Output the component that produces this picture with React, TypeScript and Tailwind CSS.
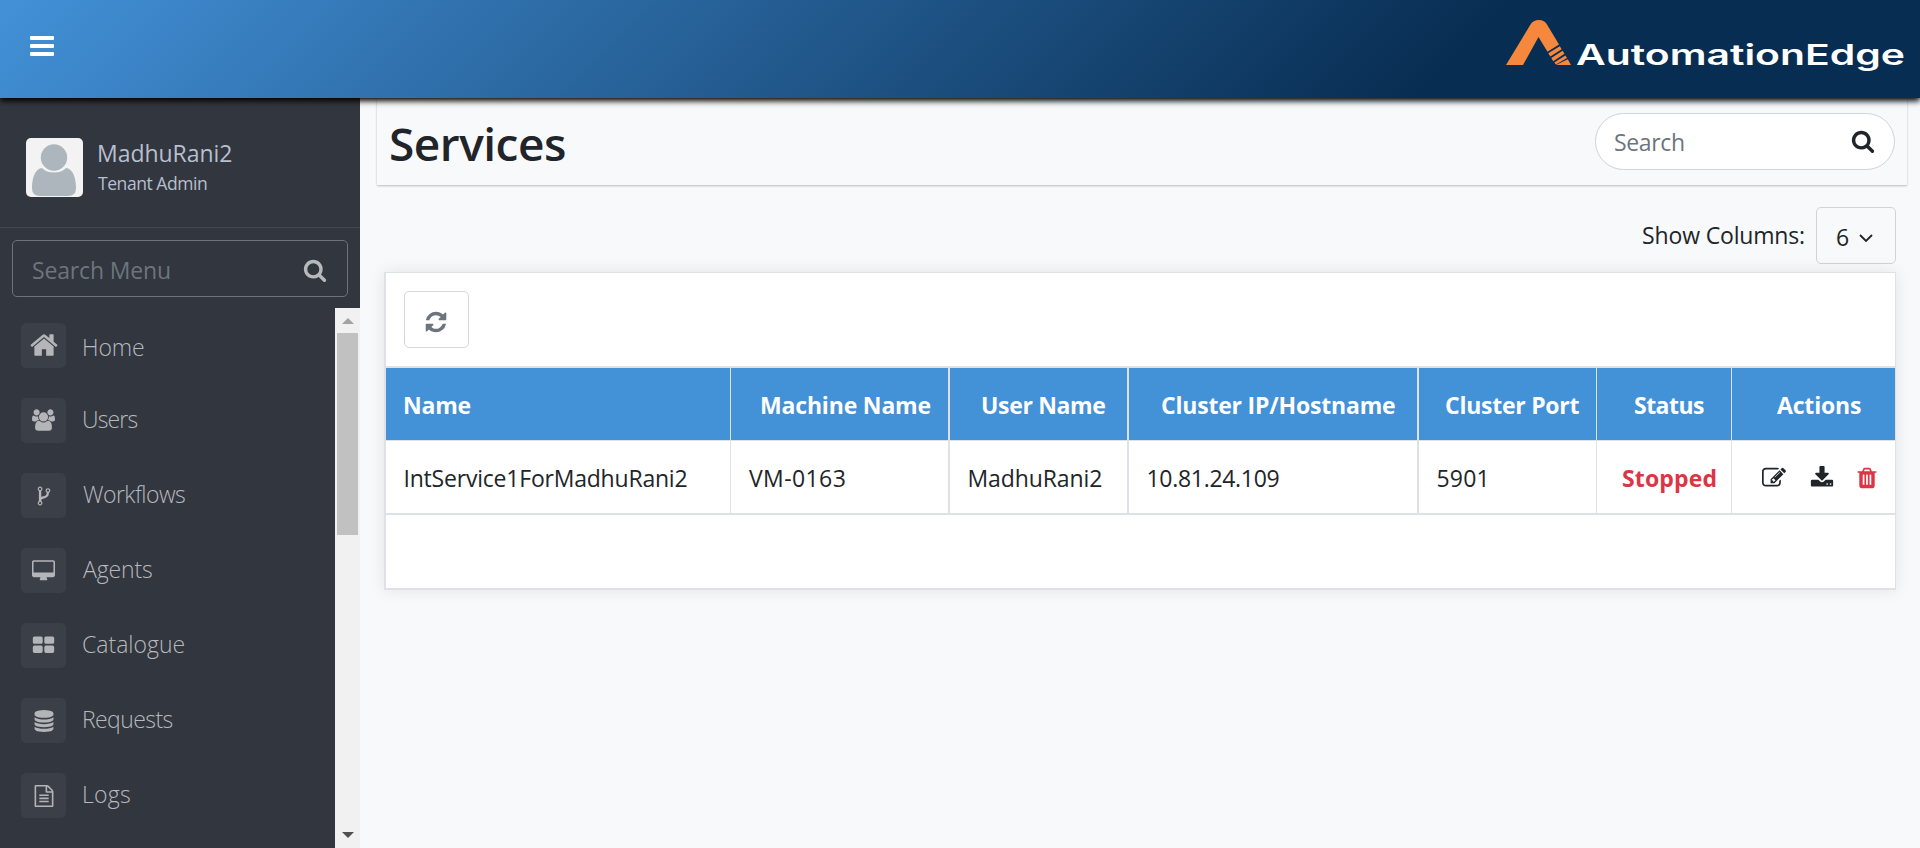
import React from "react";

const HOME = "M1472 992v480q0 26-19 45t-45 19h-384v-384h-256v384h-384q-26 0-45-19t-19-45v-480q0-1 .5-3t.5-3l575-474 575 474q1 2 1 6zm223-69l-62 74q-8 9-21 11h-3q-13 0-21-7l-692-577-692 577q-12 8-24 7-13-2-21-11l-62-74q-8-10-7-23.5t11-21.5l719-599q32-26 76-26t76 26l244 204v-195q0-14 9-23t23-9h192q14 0 23 9t9 23v408l219 182q10 8 11 21.5t-7 23.5z";
const USERS = "M593 896q-162 5-265 128h-134q-82 0-138-40.5t-56-118.5q0-353 124-353 6 0 43.5 21t97.5 42.5 119 21.5q67 0 133-23-5 37-5 66 0 139 81 256zm1071 637q0 120-73 189.5t-194 69.5h-874q-121 0-194-69.5t-73-189.5q0-53 3.5-103.5t14-109 26.5-108.5 43-97.5 62-81 85.5-53.5 111.5-20q10 0 43 21.5t73 48 107 48 135 21.5 135-21.5 107-48 73-48 43-21.5q61 0 111.5 20t85.5 53.5 62 81 43 97.5 26.5 108.5 14 109 3.5 103.5zm-1024-1277q0 106-75 181t-181 75-181-75-75-181 75-181 181-75 181 75 75 181zm704 384q0 159-112.5 271.5t-271.5 112.5-271.5-112.5-112.5-271.5 112.5-271.5 271.5-112.5 271.5 112.5 112.5 271.5zm576 225q0 78-56 118.5t-138 40.5h-134q-103-123-265-128 81-117 81-256 0-29-5-66 66 23 133 23 59 0 119-21.5t97.5-42.5 43.5-21q124 0 124 353zm-128-609q0 106-75 181t-181 75-181-75-75-181 75-181 181-75 181 75 75 181z";
const FORK = "M672 1472q0-40-28-68t-68-28-68 28-28 68 28 68 68 28 68-28 28-68zm0-1152q0-40-28-68t-68-28-68 28-28 68 28 68 68 28 68-28 28-68zm640 128q0-40-28-68t-68-28-68 28-28 68 28 68 68 28 68-28 28-68zm96 0q0 52-26 96.5t-70 69.5q-2 287-226 414-67 38-203 81-128 40-169.5 71t-41.5 100v26q44 25 70 69.5t26 96.5q0 80-56 136t-136 56-136-56-56-136q0-52 26-96.5t70-69.5v-820q-44-25-70-69.5t-26-96.5q0-80 56-136t136-56 136 56 56 136q0 52-26 96.5t-70 69.5v497q54-26 154-57 55-17 87.500-29.500t70.500-31 59-39.500 40.500-51 28-69.500 8.500-91.500q-44-25-70-69.500t-26-96.500q0-80 56-136t136-56 136 56 56 136z";
const DESKTOP = "M1728 992v-832q0-13-9.5-22.5t-22.5-9.5h-1600q-13 0-22.5 9.5t-9.5 22.5v832q0 13 9.5 22.5t22.5 9.5h1600q13 0 22.5-9.5t9.5-22.5zm128-832v1088q0 66-47 113t-113 47h-544q0 37 16 77.5t32 71 16 43.5q0 26-19 45t-45 19h-512q-26 0-45-19t-19-45q0-14 16-44t32-70 16-78h-544q-66 0-113-47t-47-113v-1088q0-66 47-113t113-47h1600q66 0 113 47t47 113z";
const GRID = "M192 192h512q128 0 128 128v320q0 128-128 128h-512q-128 0-128-128v-320q0-128 128-128zM1088 192h512q128 0 128 128v320q0 128-128 128h-512q-128 0-128-128v-320q0-128 128-128zM192 896h512q128 0 128 128v320q0 128-128 128h-512q-128 0-128-128v-320q0-128 128-128zM1088 896h512q128 0 128 128v320q0 128-128 128h-512q-128 0-128-128v-320q0-128 128-128z";
const DATABASE = "M896 768q237 0 443-43t325-127v170q0 69-103 128t-280 93.5-385 34.5-385-34.5-280-93.5-103-128v-170q119 84 325 127t443 43zm0 768q237 0 443-43t325-127v170q0 69-103 128t-280 93.5-385 34.5-385-34.5-280-93.5-103-128v-170q119 84 325 127t443 43zm0-384q237 0 443-43t325-127v170q0 69-103 128t-280 93.5-385 34.5-385-34.5-280-93.5-103-128v-170q119 84 325 127t443 43zm0-1152q208 0 385 34.5t280 93.5 103 128v128q0 69-103 128t-280 93.5-385 34.5-385-34.5-280-93.5-103-128v-128q0-69 103-128t280-93.5 385-34.5z";
const FILE = "M1596 380q28 28 48 76t20 88v1152q0 40-28 68t-68 28h-1344q-40 0-68-28t-28-68v-1600q0-40 28-68t68-28h896q40 0 88 20t76 48zm-444-244v376h376q-10-29-22-41l-313-313q-12-12-41-22zm384 1528v-1024h-416q-40 0-68-28t-28-68v-416h-768v1536h1280zm-1024-864q0-14 9-23t23-9h704q14 0 23 9t9 23v64q0 14-9 23t-23 9h-704q-14 0-23-9t-9-23v-64zm736 224q14 0 23 9t9 23v64q0 14-9 23t-23 9h-704q-14 0-23-9t-9-23v-64q0-14 9-23t23-9h704zm0 256q14 0 23 9t9 23v64q0 14-9 23t-23 9h-704q-14 0-23-9t-9-23v-64q0-14 9-23t23-9h704z";
const SEARCH = "M1216 832q0-185-131.5-316.5t-316.5-131.5-316.5 131.5-131.5 316.5 131.5 316.5 316.5 131.5 316.5-131.5 131.5-316.5zm512 832q0 52-38 90t-90 38q-54 0-90-38l-343-342q-179 124-399 124-143 0-273.5-55.5t-225-150-150-225-55.5-273.5 55.5-273.5 150-225 225-150 273.5-55.5 273.5 55.5 225 150 150 225 55.5 273.5q0 220-124 399l343 343q37 37 37 90z";
const REFRESH = "M1639 1056q0 5-1 7-64 268-268 434.5t-478 166.5q-146 0-282.5-55t-243.5-157l-129 129q-19 19-45 19t-45-19-19-45v-448q0-26 19-45t45-19h448q26 0 45 19t19 45-19 45l-137 137q71 66 161 102t187 36q134 0 250-65t186-179q11-17 53-117 8-23 30-23h192q13 0 22.5 9.5t9.5 22.5zm25-800v448q0 26-19 45t-45 19h-448q-26 0-45-19t-19-45 19-45l138-138q-148-137-349-137-134 0-250 65t-186 179q-11 17-53 117-8 23-30 23h-199q-13 0-22.5-9.5t-9.5-22.5v-7q65-268 270-434.5t480-166.5q146 0 284 55.5t245 156.5l130-129q19-19 45-19t45 19 19 45z";
const EDIT = "M888 1184l116-116-152-152-116 116v56h96v96h56zm440-720q-16-16-33 1l-350 350q-17 17-1 33t33-1l350-350q17-17 1-33zm80 594v190q0 119-84.5 203.5t-203.5 84.5h-832q-119 0-203.5-84.5t-84.5-203.5v-832q0-119 84.5-203.5t203.5-84.5h832q63 0 117 25 15 7 18 23 3 17-9 29l-49 49q-14 14-32 8-23-6-45-6h-832q-66 0-113 47t-47 113v832q0 66 47 113t113 47h832q66 0 113-47t47-113v-126q0-13 9-22l64-64q15-15 35-7t20 29zm-96-738l288 288-672 672h-288v-288zm444 132l-92 92-288-288 92-92q28-28 68-28t68 28l152 152q28 28 28 68t-28 68z";
const DOWNLOAD = "M1344 1344q0-26-19-45t-45-19-45 19-19 45 19 45 45 19 45-19 19-45zm256 0q0-26-19-45t-45-19-45 19-19 45 19 45 45 19 45-19 19-45zm128-224v320q0 40-28 68t-68 28h-1472q-40 0-68-28t-28-68v-320q0-40 28-68t68-28h465l135 136q58 56 136 56t136-56l136-136h464q40 0 68 28t28 68zm-325-569q17 41-14 70l-448 448q-18 19-45 19t-45-19l-448-448q-31-29-14-70 17-39 59-39h256v-448q0-26 19-45t45-19h256q26 0 45 19t19 45v448h256q42 0 59 39z";
const TRASH = "M704 1376v-704q0-14-9-23t-23-9h-64q-14 0-23 9t-9 23v704q0 14 9 23t23 9h64q14 0 23-9t9-23zm256 0v-704q0-14-9-23t-23-9h-64q-14 0-23 9t-9 23v704q0 14 9 23t23 9h64q14 0 23-9t9-23zm256 0v-704q0-14-9-23t-23-9h-64q-14 0-23 9t-9 23v704q0 14 9 23t23 9h64q14 0 23-9t9-23zm-544-992h448l-48-117q-7-9-17-11h-317q-10 2-17 11zm928 32v64q0 14-9 23t-23 9h-96v948q0 83-47 143.5t-113 60.5h-832q-66 0-113-58.5t-47-141.5v-952h-96q-14 0-23-9t-9-23v-64q0-14 9-23t23-9h309l70-167q15-37 54-63t79-26h320q40 0 79 26t54 63l70 167h309q14 0 23 9t9 23z";

function Glyph({ d, box = "0 0 1792 1792", className }: { d: string; box?: string; className: string }) {
  return (
    <svg viewBox={box} className={className} fill="currentColor">
      <path d={d} />
    </svg>
  );
}

const menu = [
  { label: "Home", d: HOME, size: "size-[30px] -mt-0.5", text: "ml-4 pt-0.5 tracking-[-0.12px]" },
  { label: "Users", d: USERS, box: "0 0 1920 1792", size: "h-[22px] w-[23px] -mt-0.5", text: "ml-4 -mt-1 tracking-[-0.84px]" },
  { label: "Workflows", d: FORK, size: "size-[22px]", text: "ml-[17px] -mt-1 tracking-[-0.54px]" },
  { label: "Agents", d: DESKTOP, box: "-64 0 1920 1792", size: "h-[22px] w-[23px]", text: "ml-[17px] -mt-1 tracking-[-0.13px]" },
  { label: "Catalogue", d: GRID, size: "size-[23px] -mt-px", text: "ml-4 -mt-1 tracking-normal" },
  { label: "Requests", d: DATABASE, size: "size-[22px]", text: "ml-4 -mt-1 tracking-[-0.59px]" },
  { label: "Logs", d: FILE, size: "size-[22px]", text: "ml-4 -mt-1 tracking-[0.26px]" },
];

const columns = [
  { name: "Name", value: "IntService1ForMadhuRani2", cell: "w-[345px] border-r", head: "pl-[17px] tracking-[-0.23px]", body: "pl-[17.500px] tracking-[-0.21px]" },
  { name: "Machine Name", value: "VM-0163", cell: "w-[219px] border-r-2", head: "pl-[29px] tracking-[-0.17px]", body: "pl-[18px] tracking-[0.4px]" },
  { name: "User Name", value: "MadhuRani2", cell: "w-[179px] border-r-2", head: "pl-[31px] tracking-[-0.34px]", body: "pl-[17.500px] tracking-[-0.1px]" },
  { name: "Cluster IP/Hostname", value: "10.81.24.109", cell: "w-[290px] border-r-2", head: "pl-8 tracking-[-0.2px]", body: "pl-[17.500px] tracking-[-0.3px]" },
  { name: "Cluster Port", value: "5901", cell: "w-[178px] border-r", head: "pl-[26px] tracking-[-0.26px]", body: "pl-[17.500px] tracking-[0.18px]" },
  { name: "Status", value: "Stopped", cell: "w-[135px] border-r", head: "pl-[37px] tracking-[-0.53px]", body: "pl-[25px] font-bold text-[#dc3545] tracking-[0.15px]" },
];

function Logo() {
  return (
    <svg viewBox="0 0 400 60" className="mt-[18px] mr-[14px] h-[60px] w-[400px]">
      <g fill="#f6883d">
        <path d="M0 47 L24.500 6.500 Q27 2 33 2 Q38.500 2 41 6.500 L53 26.500 L41.500 33.700 L32.500 19 L17 47 Z" />
        <path d="M42.300 35.300 L53.800 28.200 L55.700 31.200 L44.300 38.400 Z M45.300 40 L56.600 32.800 L58.500 35.800 L47.200 43.200 Z M48.300 44.600 L59.400 37.400 L61 40 L50 46.500 Z M50 47 L61.800 41.300 L65 47 Z" />
      </g>
      <text
        x="70"
        y="46.500"
        textLength="329"
        lengthAdjust="spacingAndGlyphs"
        className="fill-white font-['Inter',sans-serif] text-[28px] font-semibold"
      >
        AutomationEdge
      </text>
    </svg>
  );
}

function Sidebar() {
  return (
    <aside className="flex w-[360px] shrink-0 flex-col bg-[#32363f]">
      <div className="flex h-[130px] shrink-0 border-b border-[#43474f] pt-10 pl-[26px]">
        <svg viewBox="0 0 57 59" className="h-[59px] w-[57px]">
          <rect width="57" height="59" rx="5" fill="#f3f3f3" />
          <path d="M16 30 C8 31 6 42 6 50 Q6 58 14 58 H42 Q50 58 50 50 C50 42 48 31 40 30 Q36 34.500 28 34.500 Q20 34.500 16 30 Z" fill="#adb5bd" />
          <circle cx="28" cy="19.500" r="13.200" fill="#adb5bd" />
        </svg>
        <div className="-mt-px ml-[14px] text-[#b8bfce]">
          <div className="text-[23px] leading-8 tracking-[-0.04px]">MadhuRani2</div>
          <div className="mt-0.5 pl-px text-[17.500px] leading-6 tracking-[-0.44px]">Tenant Admin</div>
        </div>
      </div>
      <div className="mx-3 mt-3 flex h-[57px] shrink-0 items-center justify-between rounded-[5px] border border-[#6f7379] pr-5 pl-[19px]">
        <span className="pt-1 text-[23px] tracking-[-0.15px] text-[#6c757d]">Search Menu</span>
        <Glyph d={SEARCH} className="mt-0.5 size-6 text-[#b8b9bb]" />
      </div>
      <div className="mt-[11px] flex min-h-0 flex-1">
        <nav className="flex flex-1 flex-col gap-[30px] pt-[15px] pl-[21px]">
          {menu.map((m) => (
            <div key={m.label} className="flex h-[45px] shrink-0 items-center">
              <span className="flex size-[45px] items-center justify-center rounded-[5px] bg-[#3b3f48] text-[#b4b5b8]">
                <Glyph d={m.d} box={m.box} className={m.size} />
              </span>
              <span className={`text-[23px] leading-8 font-light text-[#b7b8bc] ${m.text}`}>{m.label}</span>
            </div>
          ))}
        </nav>
        <div className="flex w-[25px] flex-col items-center bg-[#f1f1f1]">
          <svg viewBox="0 0 12 6" className="mt-2.5 h-1.5 w-3">
            <path d="M0 6 L6 0 L12 6 Z" fill="#a3a3a3" />
          </svg>
          <span className="mt-[9px] h-[202px] w-[21px] bg-[#c1c1c1]" />
          <svg viewBox="0 0 12 6" className="mt-auto mb-2.5 h-1.5 w-3">
            <path d="M0 0 L6 6 L12 0 Z" fill="#505050" />
          </svg>
        </div>
      </div>
    </aside>
  );
}

function ServicesTable() {
  return (
    <section className="mt-2 mr-6 ml-6 h-[318px] border-t border-r border-b-2 border-l-2 border-[#dee2e6] bg-white shadow-[0_0_16px_rgba(0,0,0,0.09)]">
      <div className="h-[95px] border-b-2 border-[#dee2e6] pt-[18px] pl-[18px]">
        <button className="flex h-[57px] w-[65px] items-center justify-center rounded-[5px] border border-[#d3d6dc] pt-1 pr-px text-[#6c757d]">
          <Glyph d={REFRESH} className="size-6" />
        </button>
      </div>
      <div className="flex h-[73px] border-b border-[#dee2e6] bg-[#4391d6] font-bold text-white">
        {columns.map((c) => (
          <div key={c.name} className={`flex shrink-0 items-center border-[#dee2e6] pt-0.5 text-[23px] ${c.cell} ${c.head}`}>{c.name}</div>
        ))}
        <div className="flex items-center pt-0.5 pl-[45px] text-[23px] tracking-[-0.18px]">Actions</div>
      </div>
      <div className="flex h-[74px] border-b-2 border-[#dee2e6]">
        {columns.map((c) => (
          <div key={c.name} className={`flex shrink-0 items-center border-[#dee2e6] pt-0.5 text-[23px] ${c.cell} ${c.body}`}>{c.value}</div>
        ))}
        <div className="flex flex-1 items-center pt-0.5 pl-[30px]">
          <Glyph d={EDIT} className="size-6" />
          <Glyph d={DOWNLOAD} className="ml-6 size-6" />
          <Glyph d={TRASH} className="ml-[21px] size-6 text-[#dc3545]" />
        </div>
      </div>
    </section>
  );
}

export default function App() {
  return (
    <div className="flex h-[848px] w-[1920px] flex-col overflow-hidden bg-[#f8f9fb] font-['Open_Sans',sans-serif] text-[#212529]">
      <header className="relative z-10 flex h-[98px] shrink-0 items-start justify-between bg-[linear-gradient(135deg,#4391d8_0%,#082d52_75%)] shadow-[0_3px_6px_#000]">
        <div className="mt-9 ml-[30px] flex w-6 flex-col gap-1">
          <span className="h-1 rounded-[1px] bg-white" />
          <span className="h-1 rounded-[1px] bg-white" />
          <span className="h-1 rounded-[1px] bg-white" />
        </div>
        <Logo />
      </header>
      <div className="flex min-h-0 flex-1">
        <Sidebar />
        <main className="flex flex-1 flex-col">
          <div className="mr-[13px] ml-[17px] flex h-[87px] items-start justify-between bg-[#f8f9fa] pr-3 pl-3 shadow-[0_1px_2px_rgba(0,0,0,0.25)]">
            <h1 className="mt-[13px] text-[46px] leading-[64px] font-semibold tracking-[-0.5px]">Services</h1>
            <div className="mt-[15px] flex h-[57px] w-[300px] items-center justify-between rounded-full border border-[#ced4da] bg-white pr-[19px] pl-[18px]">
              <span className="pt-0.5 text-[23px] tracking-[-0.34px] text-[#6c757d]">Search</span>
              <Glyph d={SEARCH} className="-mt-0.5 size-6" />
            </div>
          </div>
          <div className="mt-[22px] flex h-[57px] items-center justify-end pr-6">
            <span className="mr-[11px] text-[23px] tracking-[-0.16px]">Show Columns:</span>
            <button className="flex h-[57px] w-20 items-center rounded-[5px] border border-[#d0d4d9] pl-[19px]">
              <span className="pt-1 text-[23px]">6</span>
              <svg viewBox="0 0 14 8" className="mt-1 ml-2.5 h-2 w-3.5">
                <path d="M1 1 L7 7 L13 1" fill="none" stroke="currentColor" strokeWidth="1.800" />
              </svg>
            </button>
          </div>
          <ServicesTable />
        </main>
      </div>
    </div>
  );
}
